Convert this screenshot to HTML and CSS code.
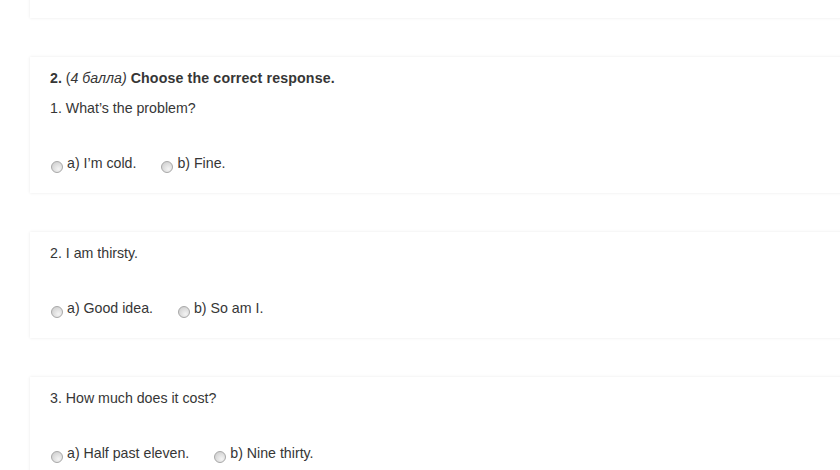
FILE: index.html
```html
<!DOCTYPE html>
<html>
<head>
<meta charset="utf-8">
<link rel="stylesheet" href="styles.css">
</head>
<body>
<div class="page">
  <div class="card card-top"></div>

  <div class="card">
    <div class="head"><b>2.</b> (<i>4 балла)</i> <b class="title">Choose the correct response.</b></div>
    <div class="q">1. What’s the problem?</div>
    <div class="answers">
      <label class="opt"><input type="radio" name="q1"> a) I’m cold.</label>
      <label class="opt"><input type="radio" name="q1"> b) Fine.</label>
    </div>
  </div>

  <div class="card">
    <div class="q first">2. I am thirsty.</div>
    <div class="answers">
      <label class="opt"><input type="radio" name="q2"> a) Good idea.</label>
      <label class="opt"><input type="radio" name="q2"> b) So am I.</label>
    </div>
  </div>

  <div class="card">
    <div class="q first">3. How much does it cost?</div>
    <div class="answers">
      <label class="opt"><input type="radio" name="q3"> a) Half past eleven.</label>
      <label class="opt"><input type="radio" name="q3"> b) Nine thirty.</label>
    </div>
  </div>
</div>
</body>
</html>
```
FILE: styles.css
```css
html, body {
  margin: 0;
  padding: 0;
  background: #fff;
  overflow: hidden;
}
body {
  font-family: "Liberation Sans", Arial, sans-serif;
  font-size: 14.2px;
  color: #363636;
}
.page {
  margin-left: 30px;
  margin-right: -40px;
  display: flex;
  flex-direction: column;
  gap: 39px;
}
.card {
  background: #fff;
  box-shadow: 0 0 3px rgba(0, 0, 0, 0.09);
  padding: 12px 20px 21px;
}
.card-top {
  height: 60px;
  padding: 0;
  margin-top: -42px;
}
.head {
  line-height: 18px;
}
.head i {
  font-style: italic;
}
.head .title {
  letter-spacing: 0.14px;
}
.q {
  line-height: 18px;
  margin-top: 12px;
}
.q.first {
  margin-top: 0;
}
.answers {
  margin-top: 37px;
  line-height: 18px;
  display: flex;
  gap: 24px;
}
.opt {
  display: inline-flex;
  align-items: baseline;
}
.opt input {
  -webkit-appearance: none;
  appearance: none;
  width: 12px;
  height: 12px;
  margin: 0 4px 0 1px;
  border-radius: 50%;
  border: 1px solid #a8a8a8;
  background: radial-gradient(circle at 65% 70%, #f4f4f4 0%, #dadada 60%, #c8c8c8 100%);
  position: relative;
  top: 5px;
}
```
